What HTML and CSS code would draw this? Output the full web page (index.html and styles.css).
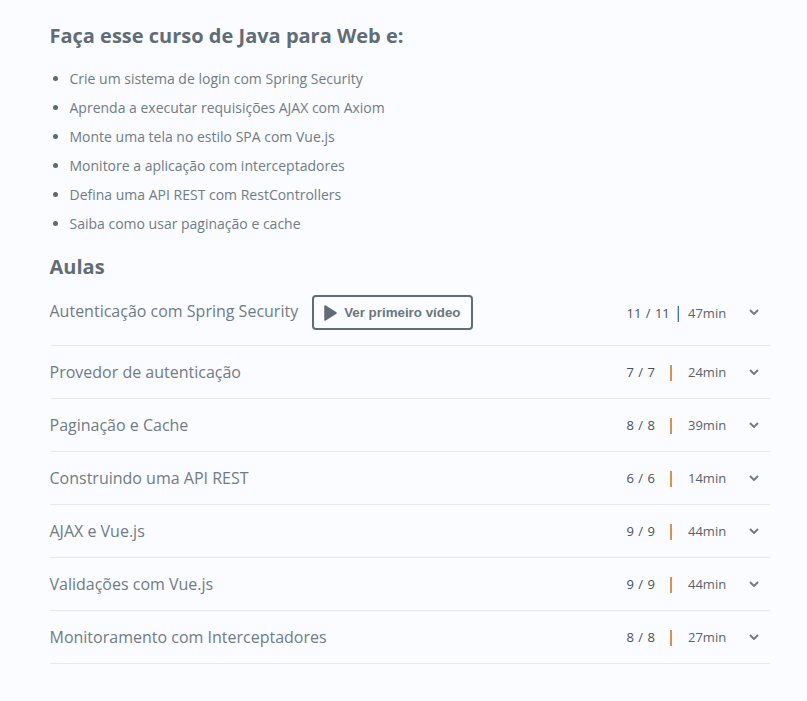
FILE: index.html
```html
<!DOCTYPE html>
<html lang="pt-BR">
<head>
<meta charset="utf-8">
<title>Java para Web</title>
<link rel="stylesheet" href="styles.css">
</head>
<body>
<main class="course">
  <h2 class="title">Faça esse curso de Java para Web e:</h2>
  <ul class="goals">
    <li>Crie um sistema de login com Spring Security</li>
    <li>Aprenda a executar requisições AJAX com Axiom</li>
    <li>Monte uma tela no estilo SPA com Vue.js</li>
    <li>Monitore a aplicação com interceptadores</li>
    <li>Defina uma API REST com RestControllers</li>
    <li>Saiba como usar paginação e cache</li>
  </ul>
  <h2 class="title">Aulas</h2>
  <ul class="lessons">
    <li class="lesson first"><span class="name">Autenticação com Spring Security</span><button class="video"><svg width="13" height="16" viewBox="0 0 13 16"><path d="M1 1L12 8L1 15Z" fill="currentColor" stroke="currentColor" stroke-width="1.5" stroke-linejoin="round"/></svg>Ver primeiro vídeo</button><span class="count">11 / 11</span><i class="bar"></i><span class="time">47min</span><svg class="chev" viewBox="0 0 10 6"><path d="M1 1L5 5L9 1"/></svg></li>
    <li class="lesson"><span class="name">Provedor de autenticação</span><span class="count">7 / 7</span><i class="bar"></i><span class="time">24min</span><svg class="chev" viewBox="0 0 10 6"><path d="M1 1L5 5L9 1"/></svg></li>
    <li class="lesson"><span class="name">Paginação e Cache</span><span class="count">8 / 8</span><i class="bar"></i><span class="time">39min</span><svg class="chev" viewBox="0 0 10 6"><path d="M1 1L5 5L9 1"/></svg></li>
    <li class="lesson"><span class="name">Construindo uma API REST</span><span class="count">6 / 6</span><i class="bar"></i><span class="time">14min</span><svg class="chev" viewBox="0 0 10 6"><path d="M1 1L5 5L9 1"/></svg></li>
    <li class="lesson"><span class="name">AJAX e Vue.js</span><span class="count">9 / 9</span><i class="bar"></i><span class="time">44min</span><svg class="chev" viewBox="0 0 10 6"><path d="M1 1L5 5L9 1"/></svg></li>
    <li class="lesson"><span class="name">Validações com Vue.js</span><span class="count">9 / 9</span><i class="bar"></i><span class="time">44min</span><svg class="chev" viewBox="0 0 10 6"><path d="M1 1L5 5L9 1"/></svg></li>
    <li class="lesson"><span class="name">Monitoramento com Interceptadores</span><span class="count">8 / 8</span><i class="bar"></i><span class="time">27min</span><svg class="chev" viewBox="0 0 10 6"><path d="M1 1L5 5L9 1"/></svg></li>
  </ul>
</main>
</body>
</html>
```
FILE: styles.css
```css
* { box-sizing: border-box; }
body { margin: 0; background: #fbfcff; color: #606c76; font-family: "Open Sans", sans-serif; }
.course { width: 720px; margin-left: 50px; padding-top: 21px; }
.title { margin: 0 0 0 -0.5px; font-size: 20px; line-height: 30px; font-weight: 700; }
.goals { margin: 13px 0 14px; padding-left: 19.5px; font-size: 14px; line-height: 29px; color: #707b84; }
.goals li::marker { color: #5e6a75; }
.lessons { list-style: none; margin: 0; padding: 0; }
.lesson { display: flex; align-items: center; height: 53px; border-bottom: 1px solid #e6e9ed; }
.lesson.first { height: 64px; padding-bottom: 3px; }
.name { margin-left: -0.5px; font-size: 16px; color: #707b84; }
.first .name { padding-bottom: 2px; }
.video { display: flex; align-items: center; gap: 7px; width: 161px; height: 35px; margin-left: 14px; padding: 1px 0 0 10px; border: 2px solid #606c76; border-radius: 4px; background: transparent; color: #6b7680; font: bold 13.33px "Liberation Sans", sans-serif; white-space: nowrap; }
.video svg { color: #606c76; }
.count { width: 43.5px; margin-left: auto; font-size: 13px; word-spacing: 1px; color: #47515b; }
.bar { width: 2px; height: 16px; margin: 2px 16px 0 0; background: linear-gradient(to right, #d8914a 0 1px, #86a9b5 1px); }
.time { width: 38px; font-size: 13px; color: #59636d; }
.chev { width: 10px; height: 6px; margin: 0 11px 1px 23px; fill: none; stroke: #727c80; stroke-width: 2; }
.first .count { width: 50.5px; padding-top: 2px; }
.first .bar { margin: 4px 9px 0 0; background: linear-gradient(to right, #c5c9c4 0 1px, #3578bd 1px); }
.first .time { padding-top: 2px; }
.first .chev { margin-bottom: 0; }
```
